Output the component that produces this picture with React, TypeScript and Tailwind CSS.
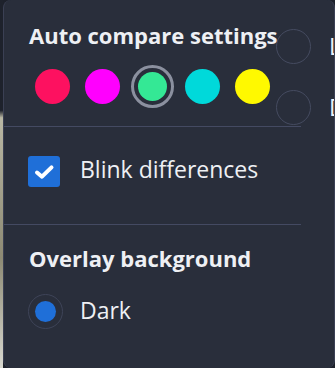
import React from 'react';

const SWATCHES = ['#fd1160', '#ff00fe', '#34e895', '#00d9da', '#fff900'];

export default function App() {
  const selected = 2;

  return (
    <div className="flex h-[368px] w-[335px] overflow-hidden bg-[#1d212b] font-['Open_Sans',sans-serif] text-[#eef0f4]">
      {/* page behind the popover */}
      <div className="w-[3px] shrink-0 bg-[linear-gradient(to_bottom,#1e222c_0%,#1e222c_30%,#b9b7a4_32%,#8d8a74_70%,#d8d8d0_100%)]" />

      <div className="relative flex-1 overflow-hidden rounded-lg border-x border-[#3b4054] bg-[#292e3b]">
        {/* submenu sitting behind */}
        <div className="absolute left-[272px] top-[29px] flex flex-col gap-[26px]">
          {['Light', 'Dark'].map((label) => (
            <div key={label} className="flex items-center gap-[18px]">
              <span className="h-[35px] w-[35px] shrink-0 rounded-full border border-[#454b60]" />
              <span className="text-[23px] leading-none">{label}</span>
            </div>
          ))}
        </div>

        <div className="relative flex w-[297px] flex-col">
          <div className="pb-[18px] pl-[25px] pt-[23px]">
            <h3 className="text-[22px] font-bold leading-[24px]">Auto compare settings</h3>
            <div className="mt-[18px] flex items-center gap-[15px] pl-[6px]">
              {SWATCHES.map((c, i) =>
                i === selected ? (
                  <span
                    key={c}
                    className="-mx-[4px] flex h-[43px] w-[43px] items-center justify-center rounded-full border-[3px] border-[#8b909f]"
                  >
                    <span className="h-[29px] w-[29px] rounded-full" style={{ backgroundColor: c }} />
                  </span>
                ) : (
                  <span key={c} className="h-[35px] w-[35px] rounded-full" style={{ backgroundColor: c }} />
                )
              )}
            </div>
          </div>

          <div className="h-px bg-[#444a62]" />

          <div className="flex h-[97px] items-center gap-[20px] pb-[8px] pl-[24px]">
            <span className="flex h-[31px] w-[32px] items-center justify-center rounded-[3px] bg-[#1f6fd8]">
              <svg width="32" height="31" viewBox="0 0 32 31">
                <path d="M9 16.5l5 4.2 9.5-9.4" fill="none" stroke="#fff" strokeWidth="4" strokeLinecap="round" strokeLinejoin="round" />
              </svg>
            </span>
            <span className="mb-[4px] text-[23px] leading-none">Blink differences</span>
          </div>

          <div className="h-px bg-[#444a62]" />

          <div className="pl-[25px] pt-[21px]">
            <h3 className="text-[22px] font-bold leading-[24px]">Overlay background</h3>
            <div className="mt-[24px] flex items-center gap-[17px] pl-[-1px]">
              <span className="-ml-px flex h-[35px] w-[35px] items-center justify-center rounded-full border border-[#3e4458]">
                <span className="h-[21px] w-[21px] rounded-full bg-[#1f6fd8]" />
              </span>
              <span className="mb-[2px] text-[23px] leading-none">Dark</span>
            </div>
          </div>
        </div>
      </div>
    </div>
  );
}
